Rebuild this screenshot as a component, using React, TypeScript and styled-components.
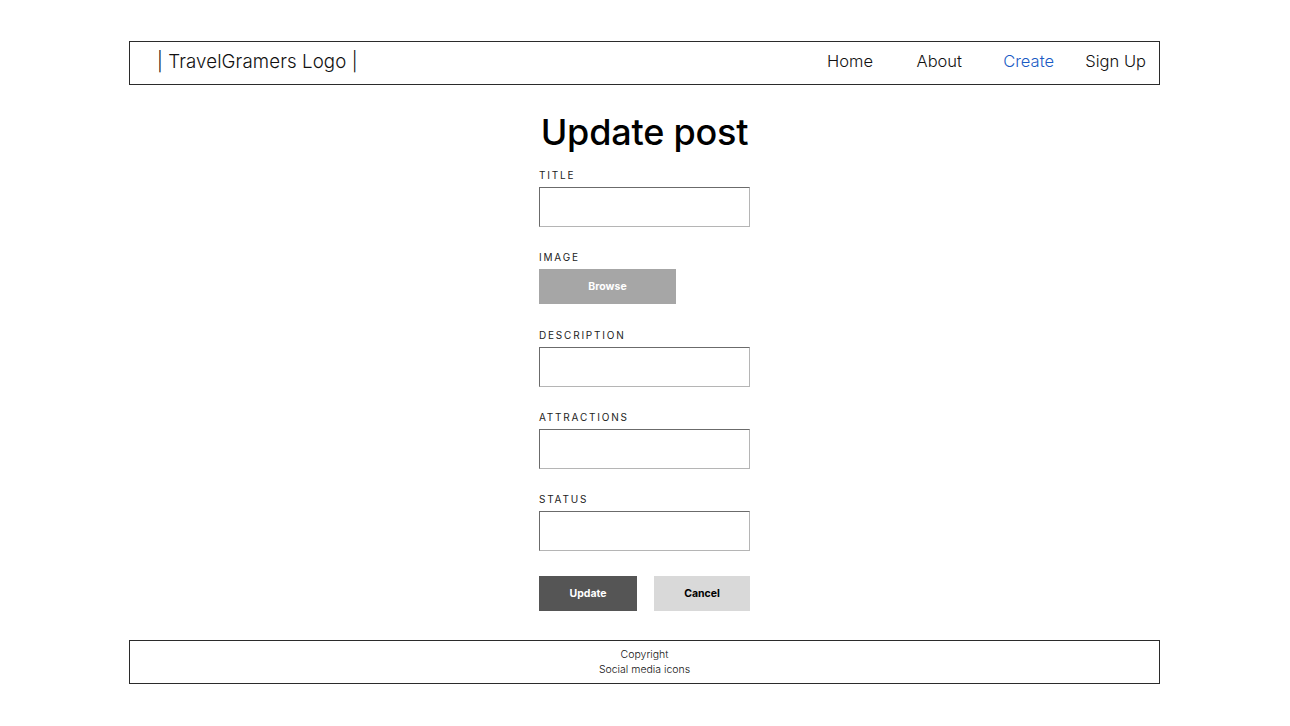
import React from "react";
import styled, { createGlobalStyle } from "styled-components";

const Global = createGlobalStyle`
  html, body { margin: 0; padding: 0; background: #fff; }
  body { font-family: "Inter", "Open Sans", sans-serif; color: #000; }
  * { box-sizing: border-box; }
`;

const Page = styled.div`
  width: 1031px;
  margin: 41px 0 0 129px;
  display: flex;
  flex-direction: column;
`;

const Header = styled.header`
  height: 44px;
  border: 1px solid #2b2b2b;
  display: flex;
  align-items: center;
  justify-content: space-between;
  padding: 0 13px 0 27px;
`;

const Logo = styled.div`
  font-size: 18.7px;
  font-weight: 300;
  letter-spacing: 0.1px;
  margin-top: -3px;
  color: #111;
`;

const Nav = styled.nav`
  display: flex;
  align-items: center;
  margin-top: -4px;
`;

const NavLink = styled.a<{ $active?: boolean; $w: number }>`
  width: ${(p) => p.$w}px;
  text-align: right;
  font-size: 16.5px;
  font-weight: 300;
  color: ${(p) => (p.$active ? "#1a5bc4" : "#111")};
  text-decoration: none;
`;

const Main = styled.main`
  display: flex;
  flex-direction: column;
  align-items: center;
  padding-top: 25px;
`;

const Title = styled.h1`
  margin: 0 0 15px;
  font-size: 36px;
  line-height: 44px;
  font-weight: 500;
  letter-spacing: -0.2px;
`;

const Form = styled.form`
  width: 211px;
  display: flex;
  flex-direction: column;
  gap: 24px;
`;

const Field = styled.div<{ $extra?: number }>`
  display: flex;
  flex-direction: column;
  gap: 6px;
  align-items: flex-start;
  margin-bottom: ${(p) => p.$extra ?? 0}px;
`;

const Label = styled.label`
  font-size: 10px;
  line-height: 12px;
  letter-spacing: 1.8px;
  color: #222;
  font-weight: 400;
`;

const Input = styled.input`
  width: 211px;
  height: 40px;
  border-style: solid;
  border-width: 1px;
  border-color: #6b6b6b #b5b5b5 #b5b5b5 #6b6b6b;
  background: #fff;
  outline: none;
`;

const Button = styled.button<{ $bg: string; $fg: string; $w: number }>`
  width: ${(p) => p.$w}px;
  height: 35px;
  border: none;
  background: ${(p) => p.$bg};
  color: ${(p) => p.$fg};
  font-family: inherit;
  font-size: 10.5px;
  font-weight: 700;
  cursor: pointer;
`;

const Actions = styled.div`
  display: flex;
  justify-content: space-between;
  margin-top: 1px;
`;

const Footer = styled.footer`
  margin-top: 29px;
  height: 44px;
  border: 1px solid #2b2b2b;
  display: flex;
  flex-direction: column;
  align-items: center;
  justify-content: center;
  font-size: 10.5px;
  font-weight: 300;
  line-height: 15px;
  color: #111;
`;

export default function App() {
  return (
    <>
      <Global />
      <Page>
        <Header>
          <Logo>| TravelGramers Logo |</Logo>
          <Nav>
            <NavLink $w={60}>Home</NavLink>
            <NavLink $w={89}>About</NavLink>
            <NavLink $w={92} $active>
              Create
            </NavLink>
            <NavLink $w={92}>Sign Up</NavLink>
          </Nav>
        </Header>
        <Main>
          <Title>Update post</Title>
          <Form>
            <Field>
              <Label>TITLE</Label>
              <Input />
            </Field>
            <Field $extra={1}>
              <Label>IMAGE</Label>
              <Button type="button" $bg="#a6a6a6" $fg="#fff" $w={137}>
                Browse
              </Button>
            </Field>
            <Field>
              <Label>DESCRIPTION</Label>
              <Input />
            </Field>
            <Field>
              <Label>ATTRACTIONS</Label>
              <Input />
            </Field>
            <Field>
              <Label>STATUS</Label>
              <Input />
            </Field>
            <Actions>
              <Button type="button" $bg="#555555" $fg="#fff" $w={98}>
                Update
              </Button>
              <Button type="button" $bg="#d9d9d9" $fg="#000" $w={96}>
                Cancel
              </Button>
            </Actions>
          </Form>
        </Main>
        <Footer>
          <div>Copyright</div>
          <div>Social media icons</div>
        </Footer>
      </Page>
    </>
  );
}
